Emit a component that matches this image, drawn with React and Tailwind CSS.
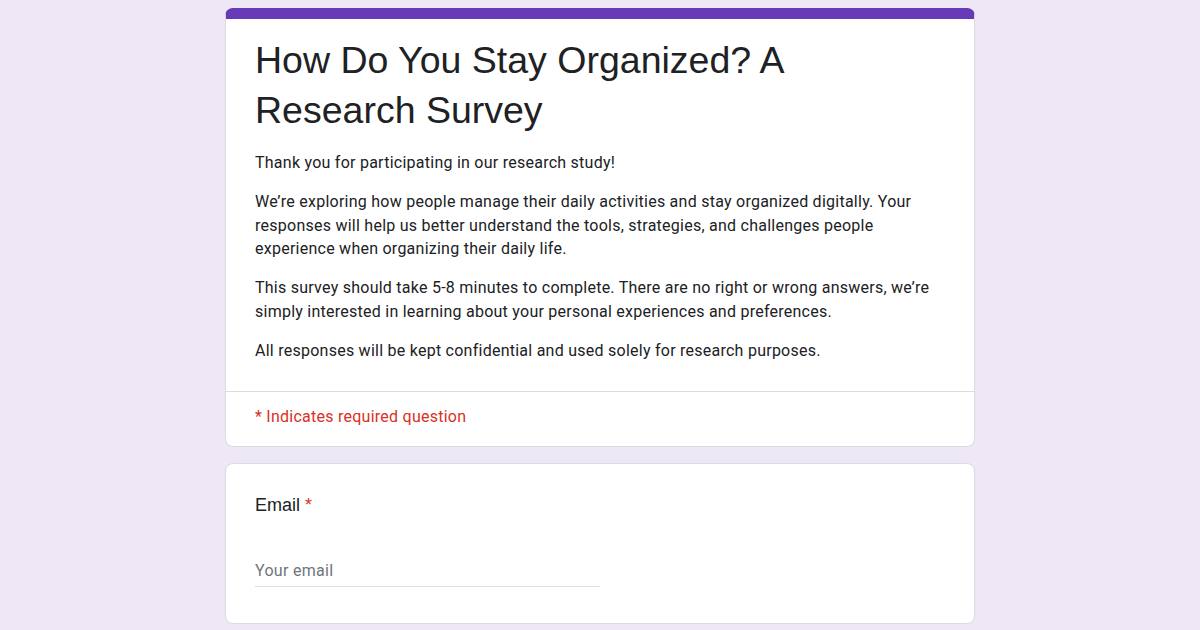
import React from 'react';

const paragraphs = [
  'Thank you for participating in our research study!',
  'We’re exploring how people manage their daily activities and stay organized digitally. Your responses will help us better understand the tools, strategies, and challenges people experience when organizing their daily life.',
  'This survey should take 5-8 minutes to complete. There are no right or wrong answers, we’re simply interested in learning about your personal experiences and preferences.',
  'All responses will be kept confidential and used solely for research purposes.',
];

export default function App() {
  return (
    <div className="min-h-screen bg-[#ede7f6] pt-2">
      <div className="w-[750px] mx-auto flex flex-col gap-4">
        {/* Header card */}
        <div className="bg-white rounded-lg border border-[#dadce0] border-t-[11px] border-t-[#673ab7]">
          <div className="px-[29px] pt-[16px] pb-[29px] border-b border-[#dadce0]">
            <h1 className="max-w-[640px] text-[37.5px] leading-[50px] text-[#202124] font-['Liberation_Sans',Arial,sans-serif]">
              How Do You Stay Organized? A Research Survey
            </h1>
            <div className="mt-[16px] flex flex-col gap-[15.5px] font-['Roboto',sans-serif] text-[16px] leading-[23.5px] text-[#202124] tracking-[0.25px]">
              {paragraphs.map((p, i) => (
                <p key={i}>{p}</p>
              ))}
            </div>
          </div>
          <div className="px-[29px] pt-[13px] pb-[17px] font-['Roboto',sans-serif] text-[16px] leading-[24px] text-[#d93025] tracking-[0.25px]">
            * Indicates required question
          </div>
        </div>

        {/* Email question */}
        <div className="bg-white rounded-lg border border-[#dadce0] px-[29px] pt-[29px] pb-[36px]">
          <div className="text-[18px] leading-[24px] text-[#202124] font-['Liberation_Sans',Arial,sans-serif]">
            Email <span className="text-[#d93025]">*</span>
          </div>
          <div className="mt-[41px] w-[345px] border-b border-[#e0e0e0] pb-[3px]">
            <span className="font-['Roboto',sans-serif] text-[16px] leading-[24px] text-[#70757a] tracking-[0.3px]">Your email</span>
          </div>
        </div>
      </div>
    </div>
  );
}
